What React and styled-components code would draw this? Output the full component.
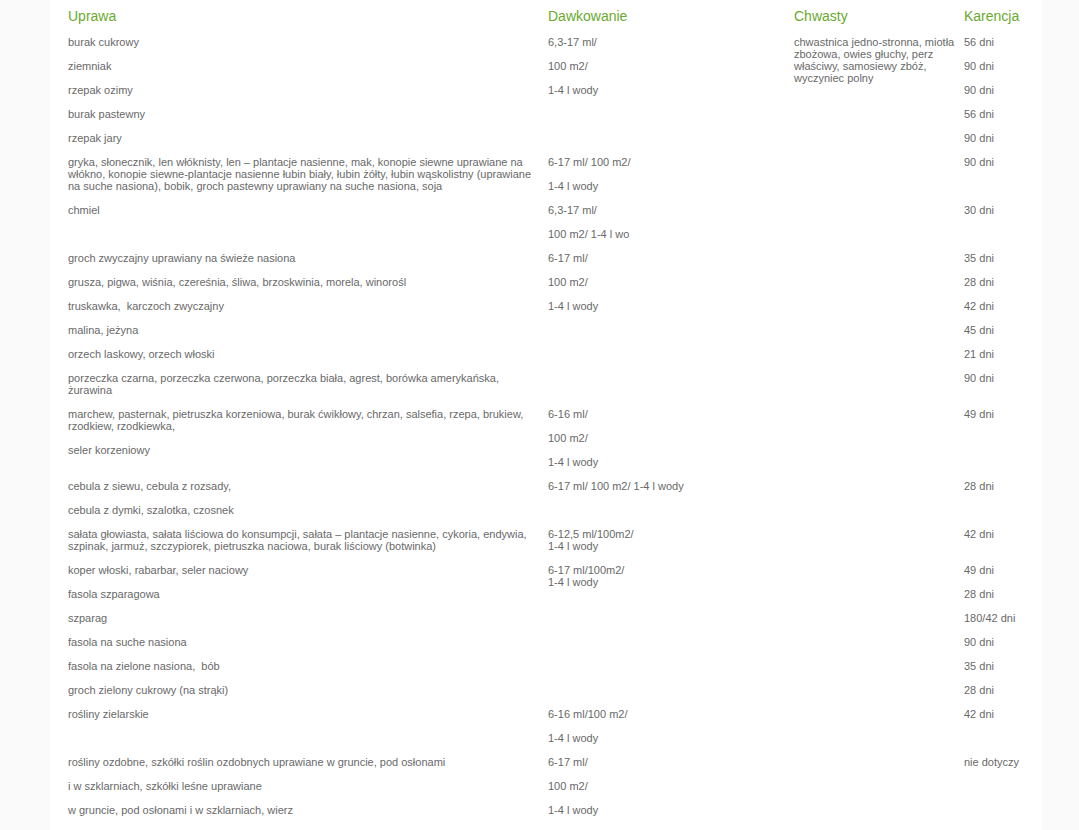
import React from "react";
import styled, { createGlobalStyle } from "styled-components";

const Global = createGlobalStyle`
  html, body { margin: 0; padding: 0; background: #fafafa; }
  body { font-family: "Liberation Sans", Arial, sans-serif; }
`;

const Panel = styled.div`
  margin-left: 50px;
  width: 992px;
  min-height: 830px;
  background: #ffffff;
  padding: 8px 0 0 18px;
  box-sizing: border-box;
`;

const Table = styled.div`
  display: grid;
  grid-template-columns: 480px 246px 170px 1fr;
  align-items: start;
`;

const Head = styled.div`
  font-size: 14px;
  line-height: 16px;
  color: #6aa92e;
  margin-bottom: 12px;
`;

const Cell = styled.div`
  font-size: 11px;
  color: #696969;
  padding-right: ${(p) => p.$pad ?? 6}px;
  grid-column: ${(p) => p.$col};
  grid-row: ${(p) => (p.$span ? `span ${p.$span}` : "auto")};
`;

const Para = styled.p`
  margin: 0 0 ${(p) => (p.$tight ? 0 : 12)}px;
  line-height: 12px;
`;

const P = (text, tight) => ({ text, tight });

const rows = [
  { u: ["burak cukrowy"], d: ["6,3-17 ml/"], k: ["56 dni"] },
  { u: ["ziemniak"], d: ["100 m2/"], k: ["90 dni"] },
  { u: ["rzepak ozimy"], d: ["1-4 l wody"], k: ["90 dni"] },
  { u: ["burak pastewny"], d: [], k: ["56 dni"] },
  { u: ["rzepak jary"], d: [], k: ["90 dni"] },
  {
    u: [
      "gryka, słonecznik, len włóknisty, len – plantacje nasienne, mak, konopie siewne uprawiane na włókno, konopie siewne-plantacje nasienne łubin biały, łubin żółty, łubin wąskolistny (uprawiane na suche nasiona), bobik, groch pastewny uprawiany na suche nasiona, soja",
    ],
    d: ["6-17 ml/ 100 m2/", "1-4 l wody"],
    k: ["90 dni"],
  },
  { u: ["chmiel"], d: ["6,3-17 ml/", "100 m2/ 1-4 l wo"], k: ["30 dni"] },
  { u: ["groch zwyczajny uprawiany na świeże nasiona"], d: ["6-17 ml/"], k: ["35 dni"] },
  {
    u: ["grusza, pigwa, wiśnia, czereśnia, śliwa, brzoskwinia, morela, winorośl"],
    d: ["100 m2/"],
    k: ["28 dni"],
  },
  { u: ["truskawka,\u00a0 karczoch zwyczajny"], d: ["1-4 l wody"], k: ["42 dni"] },
  { u: ["malina, jeżyna"], d: [], k: ["45 dni"] },
  { u: ["orzech laskowy, orzech włoski"], d: [], k: ["21 dni"] },
  {
    u: ["porzeczka czarna, porzeczka czerwona, porzeczka biała, agrest, borówka amerykańska, żurawina"],
    d: [],
    k: ["90 dni"],
  },
  {
    u: [
      "marchew, pasternak, pietruszka korzeniowa, burak ćwikłowy, chrzan, salsefia, rzepa, brukiew, rzodkiew, rzodkiewka,",
      "seler korzeniowy",
    ],
    d: ["6-16 ml/", "100 m2/", "1-4 l wody"],
    k: ["49 dni"],
  },
  { u: ["cebula z siewu, cebula z rozsady,"], d: ["6-17 ml/ 100 m2/ 1-4 l wody"], k: ["28 dni"] },
  { u: ["cebula z dymki, szalotka, czosnek"], d: [], k: [] },
  {
    u: [
      "sałata głowiasta, sałata liściowa do konsumpcji, sałata – plantacje nasienne, cykoria, endywia, szpinak, jarmuż, szczypiorek, pietruszka naciowa, burak liściowy (botwinka)",
    ],
    d: [P(["6-12,5 ml/100m2/", "1-4 l wody"])],
    k: ["42 dni"],
  },
  {
    u: ["koper włoski, rabarbar, seler naciowy"],
    d: [P(["6-17 ml/100m2/", "1-4 l wody"], true)],
    k: ["49 dni"],
  },
  { u: ["fasola szparagowa"], d: [], k: ["28 dni"] },
  { u: ["szparag"], d: [], k: ["180/42 dni"] },
  { u: ["fasola na suche nasiona"], d: [], k: ["90 dni"] },
  { u: ["fasola na zielone nasiona,\u00a0 bób"], d: [], k: ["35 dni"] },
  { u: ["groch zielony cukrowy (na strąki)"], d: [], k: ["28 dni"] },
  { u: ["rośliny zielarskie"], d: ["6-16 ml/100 m2/", "1-4 l wody"], k: ["42 dni"] },
  {
    u: ["rośliny ozdobne, szkółki roślin ozdobnych uprawiane w gruncie, pod osłonami"],
    d: ["6-17 ml/"],
    k: ["nie dotyczy"],
  },
  { u: ["i w szklarniach, szkółki leśne uprawiane"], d: ["100 m2/"], k: [] },
  { u: ["w gruncie, pod osłonami i w szklarniach, wierz"], d: ["1-4 l wody"], k: [] },
];

const weeds = "chwastnica jedno-stronna, miotła zbożowa, owies głuchy, perz właściwy, samosiewy zbóż, wyczyniec polny";

function Paras({ items }) {
  return items.map((it, i) => {
    if (typeof it === "string") return <Para key={i}>{it}</Para>;
    return (
      <Para key={i} $tight={it.tight}>
        {it.text.map((line, j) => (
          <React.Fragment key={j}>
            {j > 0 && <br />}
            {line}
          </React.Fragment>
        ))}
      </Para>
    );
  });
}

export default function App() {
  return (
    <>
      <Global />
      <Panel>
        <Table>
          <Head>Uprawa</Head>
          <Head>Dawkowanie</Head>
          <Head>Chwasty</Head>
          <Head>Karencja</Head>
          {rows.map((r, i) => (
            <React.Fragment key={i}>
              <Cell $col={1}>
                <Paras items={r.u} />
              </Cell>
              <Cell $col={2}>
                <Paras items={r.d} />
              </Cell>
              {i === 0 && (
                <Cell $col={3} $span={5} $pad={2}>
                  <Para>{weeds}</Para>
                </Cell>
              )}
              <Cell $col={4}>
                <Paras items={r.k} />
              </Cell>
            </React.Fragment>
          ))}
        </Table>
      </Panel>
    </>
  );
}
